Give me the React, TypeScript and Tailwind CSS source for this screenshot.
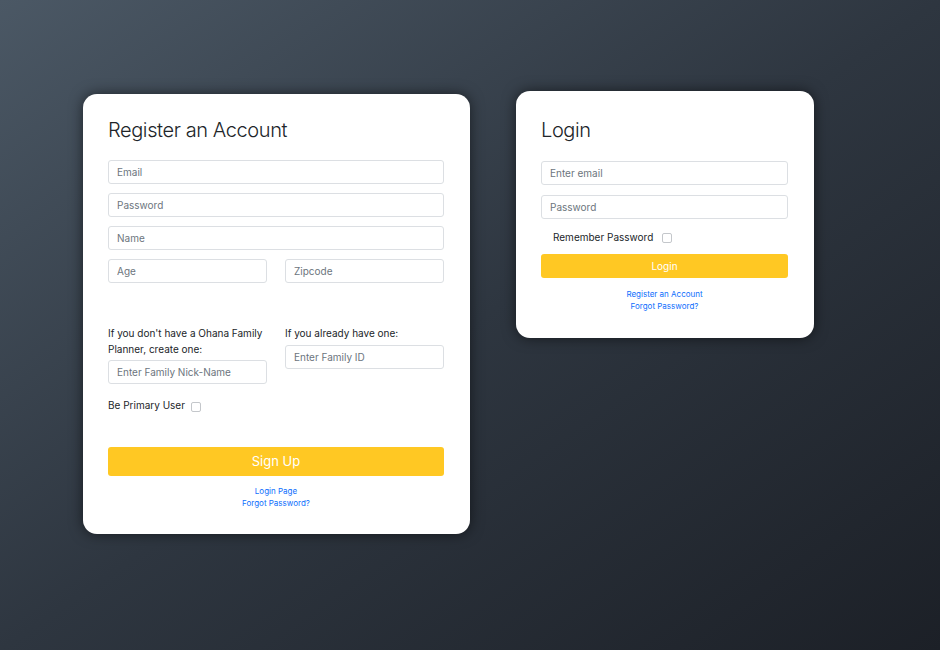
import React from "react";

const font = { fontFamily: "Inter, 'Noto Sans', sans-serif" };

const inputStyle = `w-full h-[24px] px-[8px]
  border border-[#dcdfe3] rounded-[3px] outline-none bg-white
  text-[10px] text-[#333] placeholder-[#6c757d]`;

const linkStyle = "block text-[8px] leading-[12px] text-[#0d6efd]";

function Checkbox() {
  return (
    <span className="inline-block w-[10px] h-[10px] rounded-[2px] border border-[#c4c7cb] bg-white" />
  );
}

export default function App() {
  return (
    <div
      className="w-full min-h-screen h-[650px] bg-linear-to-br from-[#4b5865] via-[#2e3640] to-[#1c2027]
                 flex items-start pl-[83px] pt-[91px] gap-[46px] text-[#212529]"
      style={font}
    >
      {/* Register Card */}
      <div className="mt-[3px] w-[387px] bg-white rounded-[14px] shadow-[0_0_14px_rgba(0,0,0,0.55)] pl-[25px] pr-[26px] pt-[22px] pb-[25px]">
        <h2 className="text-[20px] leading-[28px] font-light tracking-[-0.4px]">Register an Account</h2>

        <form className="mt-[16px] flex flex-col gap-[9px]" onSubmit={(e) => e.preventDefault()}>
          <input className={inputStyle} placeholder="Email" />
          <input className={inputStyle} type="password" placeholder="Password" />
          <input className={inputStyle} placeholder="Name" />
          <div className="grid grid-cols-2 gap-[18px]">
            <input className={inputStyle} placeholder="Age" />
            <input className={inputStyle} placeholder="Zipcode" />
          </div>
        </form>

        {/* Family section */}
        <div className="mt-[42px] grid grid-cols-2 gap-[18px]">
          <div>
            <p className="text-[10px] leading-[16px]">
              If you don't have a Ohana Family
              <br />
              Planner, create one:
            </p>
            <input className={`${inputStyle} mt-[3px]`} placeholder="Enter Family Nick-Name" />
          </div>
          <div>
            <p className="text-[10px] leading-[16px]">If you already have one:</p>
            <input className={`${inputStyle} mt-[4px]`} placeholder="Enter Family ID" />
          </div>
        </div>

        <div className="mt-[13px] flex items-center gap-[6px] h-[16px]">
          <span className="text-[10px] leading-[16px]">Be Primary User</span>
          <span className="mt-[3px] flex"><Checkbox /></span>
        </div>

        <button className="mt-[34px] w-full h-[29px] rounded-[3px] bg-[#ffc823] text-white text-[13px]">
          Sign Up
        </button>

        <div className="mt-[9px] text-center">
          <a className={linkStyle}>Login Page</a>
          <a className={linkStyle}>Forgot Password?</a>
        </div>
      </div>

      {/* Login Card */}
      <div className="w-[298px] bg-white rounded-[14px] shadow-[0_0_14px_rgba(0,0,0,0.55)] pl-[25px] pr-[26px] pt-[25px] pb-[26px]">
        <h2 className="text-[20px] leading-[28px] font-light tracking-[-0.4px]">Login</h2>

        <div className="mt-[17px] flex flex-col gap-[10px]">
          <input className={inputStyle} placeholder="Enter email" />
          <input className={inputStyle} type="password" placeholder="Password" />
        </div>

        <div className="mt-[10px] pl-[12px] flex items-center gap-[9px] h-[16px]">
          <span className="text-[10px] leading-[16px]">Remember Password</span>
          <span className="mt-[2px] flex"><Checkbox /></span>
        </div>

        <button className="mt-[9px] w-full h-[24px] rounded-[3px] bg-[#ffc823] text-white text-[10px]">
          Login
        </button>

        <div className="mt-[10px] text-center">
          <a className={linkStyle}>Register an Account</a>
          <a className={linkStyle}>Forgot Password?</a>
        </div>
      </div>
    </div>
  );
}
